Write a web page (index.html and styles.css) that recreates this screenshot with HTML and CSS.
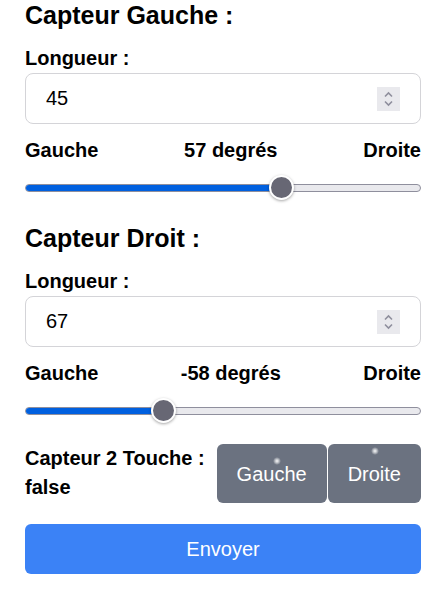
FILE: index.html
```html
<!DOCTYPE html>
<html lang="fr">
<head>
<meta charset="utf-8">
<title>Capteurs</title>
<link rel="stylesheet" href="styles.css">
</head>
<body>
<main class="page">
  <section class="sensor">
    <h2 class="sensor-title">Capteur Gauche :</h2>
    <label class="field-label" for="len-left">Longueur :</label>
    <div class="number-box">
      <input id="len-left" class="number-input" type="text" value="45">
      <svg class="spinner" width="23" height="24" viewBox="0 0 23 24" aria-hidden="true">
        <rect width="23" height="24" fill="#e9e9ed"/>
        <path d="M8 9.5 L11.5 6 L15 9.5" fill="none" stroke="#8f8f9d" stroke-width="1.6"/>
        <path d="M8 14.5 L11.5 18 L15 14.5" fill="none" stroke="#8f8f9d" stroke-width="1.6"/>
      </svg>
    </div>
    <div class="angle-row">
      <span>Gauche</span>
      <span>57 degrés</span>
      <span>Droite</span>
    </div>
    <div class="slider" style="--p:0.6583">
      <div class="track"><div class="fill"></div></div>
      <div class="thumb"></div>
    </div>
  </section>

  <section class="sensor">
    <h2 class="sensor-title">Capteur Droit :</h2>
    <label class="field-label" for="len-right">Longueur :</label>
    <div class="number-box">
      <input id="len-right" class="number-input" type="text" value="67">
      <svg class="spinner" width="23" height="24" viewBox="0 0 23 24" aria-hidden="true">
        <rect width="23" height="24" fill="#e9e9ed"/>
        <path d="M8 9.5 L11.5 6 L15 9.5" fill="none" stroke="#8f8f9d" stroke-width="1.6"/>
        <path d="M8 14.5 L11.5 18 L15 14.5" fill="none" stroke="#8f8f9d" stroke-width="1.6"/>
      </svg>
    </div>
    <div class="angle-row">
      <span>Gauche</span>
      <span>-58 degrés</span>
      <span>Droite</span>
    </div>
    <div class="slider" style="--p:0.3389">
      <div class="track"><div class="fill"></div></div>
      <div class="thumb"></div>
    </div>
  </section>

  <div class="touch-row">
    <p class="touch-state">Capteur 2 Touche : false</p>
    <div class="dir-buttons">
      <button class="dir-btn dir-left" type="button">Gauche<span class="glow"></span></button>
      <button class="dir-btn dir-right" type="button">Droite<span class="glow"></span></button>
    </div>
  </div>

  <button class="send-btn" type="button">Envoyer</button>
</main>
</body>
</html>
```

FILE: styles.css
```css
* { box-sizing: border-box; }

html, body {
  margin: 0;
  padding: 0;
  background: #ffffff;
}

body {
  font-family: "Liberation Sans", Arial, sans-serif;
  color: #000;
}

.page {
  width: 447px;
  padding: 0 26px 0 25px;
  display: flex;
  flex-direction: column;
}

.sensor {
  display: flex;
  flex-direction: column;
  margin-bottom: 22px;
}

.sensor + .sensor {
  margin-bottom: 20px;
}

.sensor-title {
  margin: 0 0 13px;
  font-size: 25px;
  line-height: 30px;
  font-weight: 700;
}

.field-label {
  display: block;
  font-size: 20px;
  line-height: 30px;
  font-weight: 700;
}

.number-box {
  display: flex;
  align-items: center;
  height: 51px;
  border: 1px solid #d4d4d8;
  border-radius: 8px;
  padding: 0 20px;
}

.number-input {
  flex: 1;
  min-width: 0;
  border: 0;
  outline: none;
  padding: 0;
  margin: 0;
  background: transparent;
  font-family: inherit;
  font-size: 20px;
  color: #000;
}

.spinner {
  flex: none;
  margin-top: 1px;
}

.angle-row {
  display: flex;
  justify-content: space-between;
  margin-top: 11px;
  font-size: 20px;
  line-height: 30px;
  font-weight: 700;
}

.slider {
  position: relative;
  height: 26px;
  margin-top: 10px;
  display: flex;
  align-items: center;
}

.track {
  width: 100%;
  height: 8px;
  border-radius: 4px;
  background: #e9e9ed;
  border: 1px solid #8f8f9d;
  overflow: hidden;
  position: relative;
}

.fill {
  width: calc(var(--p) * (100% - 25px) + 12.5px);
  background: #0060df;
  margin: -1px 0 0 -1px;
  height: 8px;
  border-radius: 4px 0 0 4px;
}

.thumb {
  position: absolute;
  top: 0;
  left: calc(var(--p) * (100% - 25px));
  width: 25px;
  height: 25px;
  border-radius: 50%;
  background: #676774;
  border: 2px solid #ffffff;
  box-shadow: 0 1px 3px rgba(0, 0, 0, 0.35);
}

.touch-row {
  display: flex;
  align-items: flex-start;
  gap: 10px;
}

.touch-state {
  flex: 1;
  margin: 0;
  font-size: 20px;
  line-height: 29px;
  font-weight: 700;
}

.dir-buttons {
  display: flex;
  gap: 1px;
}

.dir-btn {
  position: relative;
  height: 59px;
  padding: 0 20px;
  border: 0;
  border-radius: 6px;
  background: #6b7280;
  color: #ffffff;
  font-family: inherit;
  font-size: 20px;
  line-height: 30px;
}

.glow {
  position: absolute;
  width: 8px;
  height: 8px;
  border-radius: 50%;
  background: radial-gradient(circle, rgba(255,255,255,0.95) 0, rgba(255,255,255,0.6) 30%, rgba(255,255,255,0) 70%);
}

.dir-left .glow { left: 56px; top: 13px; }
.dir-right .glow { left: 43px; top: 3px; }

.send-btn {
  display: block;
  width: 100%;
  height: 50px;
  margin-top: 21px;
  border: 0;
  border-radius: 6px;
  background: #3b82f6;
  color: #ffffff;
  font-family: inherit;
  font-size: 20px;
}
```
